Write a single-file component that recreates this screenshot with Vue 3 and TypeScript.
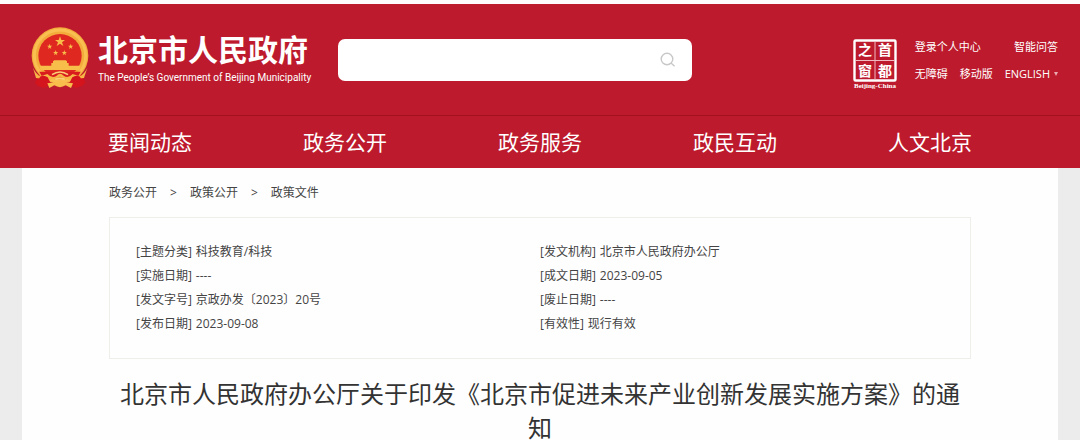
<script setup lang="ts">
import { ref } from 'vue'

interface Field {
  label: string
  value: string
}

const keyword = ref('')

const navItems: string[] = ['要闻动态', '政务公开', '政务服务', '政民互动', '人文北京']
const crumbs: string[] = ['政务公开', '政策公开', '政策文件']

const columns: Field[][] = [
  [
    { label: '主题分类', value: '科技教育/科技' },
    { label: '实施日期', value: '----' },
    { label: '发文字号', value: '京政办发〔2023〕20号' },
    { label: '发布日期', value: '2023-09-08' },
  ],
  [
    { label: '发文机构', value: '北京市人民政府办公厅' },
    { label: '成文日期', value: '2023-09-05' },
    { label: '废止日期', value: '----' },
    { label: '有效性', value: '现行有效' },
  ],
]
</script>

<template>
  <div class="page">
    <header class="header">
      <div class="top">
        <a class="brand" href="#">
          <svg class="emblem" viewBox="15 12 180 192" aria-hidden="true">
            <path d="M42 152 L30 184 L52 196 L74 180 L136 180 L158 196 L182 182 L168 152Z" fill="#d3141c" />
            <circle cx="105" cy="101" r="85" fill="#f3ac3c" />
            <circle cx="105" cy="101" r="77" fill="none" stroke="#f9bf50" stroke-width="9" />
            <circle cx="105" cy="101" r="65" fill="#df2920" />
            <g fill="#f8be4a">
              <path d="M105 43 l4 11 h11 l-9 7 4 11 -10 -7 -10 7 4 -11 -9 -7 h11z" />
              <path d="M74 65 l2 6 h6 l-5 4 2 6 -5 -4 -5 4 2 -6 -5 -4 h6z" />
              <path d="M137 65 l2 6 h6 l-5 4 2 6 -5 -4 -5 4 2 -6 -5 -4 h6z" />
              <path d="M92 84 l2 6 h6 l-5 4 2 6 -5 -4 -5 4 2 -6 -5 -4 h6z" />
              <path d="M118 84 l2 6 h6 l-5 4 2 6 -5 -4 -5 4 2 -6 -5 -4 h6z" />
              <path d="M84 118 l4 -3 h34 l4 3 v5 h5 v8 h36 l-4 13 h-116 l-4 -13 h36 v-8 h5z" />
            </g>
            <path d="M43 149 H167 L158 166 H52Z" fill="#d91d1f" />
            <path d="M24 137 Q33 157 47 163 L67 156 Q82 171 95 161 Q105 150 116 161 Q129 171 143 156 L163 163 Q178 157 187 137 L177 168 L157 170 L135 174 L105 164 L76 174 L52 170 L33 168Z" fill="#f6b747" />
            <path d="M45 164 Q57 158 68 166 L78 185 L58 198 L34 190Z M165 164 Q153 158 142 166 L132 185 L152 198 L176 190Z" fill="#d5151d" />
            <path d="M67 184 L90 181 Q105 172 121 181 L144 184 L138 198 L122 190 Q105 201 88 190 L73 198Z" fill="#f8bd4c" />
            <path d="M81 158 Q105 142 129 158 M91 172 Q105 166 119 172" fill="none" stroke="#fbcf78" stroke-width="5" />
          </svg>
          <span class="brand-text">
            <span class="brand-name">北京市人民政府</span>
            <span class="brand-en">The People’s Government of Beijing Municipality</span>
          </span>
        </a>

        <form class="search" role="search" @submit.prevent>
          <input v-model="keyword" class="search-input" type="text" aria-label="搜索" />
          <button class="search-button" type="submit" aria-label="搜索">
            <svg viewBox="0 0 16 16" width="16" height="16" fill="none" stroke="#c8c8c8" stroke-width="1.4">
              <circle cx="7" cy="7" r="5.8" />
              <path d="M11 11 L14.6 14.2" />
            </svg>
          </button>
        </form>

        <div class="tools">
          <a class="seal" href="#" aria-label="首都之窗">
            <svg viewBox="0 0 48 52" width="48" height="52">
              <rect x="3.5" y="2.5" width="41" height="40" rx="1" fill="none" stroke="#fff" stroke-width="2.4" />
              <path d="M24 3 V42 M4 22.5 H44" stroke="#f0b9bf" stroke-width="1" />
              <g class="seal-chars" fill="#fff" text-anchor="middle">
                <text x="14" y="17">之</text>
                <text x="34" y="17">首</text>
                <text x="14" y="38">窗</text>
                <text x="34" y="38">都</text>
              </g>
              <text class="seal-en" x="24" y="50" fill="#fff" text-anchor="middle">Beijing-China</text>
            </svg>
          </a>
          <div class="links">
            <div class="link-row">
              <a href="#">登录个人中心</a>
              <a href="#">智能问答</a>
            </div>
            <div class="link-row">
              <a href="#">无障碍</a>
              <a href="#">移动版</a>
              <a class="lang" href="#">ENGLISH
                <svg viewBox="0 0 4 4" width="4" height="4" aria-hidden="true"><path d="M0 0H4L2 4Z" fill="#e9a9af" /></svg>
              </a>
            </div>
          </div>
        </div>
      </div>

      <nav class="nav" aria-label="主导航">
        <a v-for="item in navItems" :key="item" href="#">{{ item }}</a>
      </nav>
    </header>

    <div class="backdrop">
      <main class="content">
        <nav class="crumbs" aria-label="当前位置">
          <template v-for="(crumb, i) in crumbs" :key="crumb">
            <span v-if="i > 0">&gt;</span>
            <a href="#">{{ crumb }}</a>
          </template>
        </nav>

        <section class="info">
          <dl v-for="(fields, i) in columns" :key="i" class="info-column">
            <div v-for="field in fields" :key="field.label" class="field">
              <dt>[{{ field.label }}]</dt>
              <dd>{{ field.value }}</dd>
            </div>
          </dl>
        </section>

        <h1 class="title">北京市人民政府办公厅关于印发《北京市促进未来产业创新发展实施方案》的通知</h1>
      </main>
    </div>
  </div>
</template>

<style>
body {
  margin: 0;
  background: #ececec;
}
</style>

<style scoped>
.page {
  min-height: 100vh;
  display: flex;
  flex-direction: column;
  box-sizing: border-box;
  border-top: 4px solid #fdfbfb;
  font-family: "Open Sans", "Noto Sans CJK SC", sans-serif;
  font-size: 12px;
  line-height: 24px;
  color: #444;
}

a {
  color: inherit;
  text-decoration: none;
}

.header {
  flex: none;
  background: #bd1b2d;
  color: #fff;
}

.top {
  display: flex;
  align-items: flex-start;
  box-sizing: border-box;
  min-height: 111px;
  padding: 22px 22px 0 30px;
}

.brand {
  flex: none;
  display: flex;
  gap: 8px;
  width: 284px;
}

.emblem {
  width: 60px;
  height: 64px;
}

.brand-text {
  display: flex;
  flex-direction: column;
  padding-top: 6px;
  white-space: nowrap;
}

.brand-name {
  font-size: 30px;
  font-weight: 700;
  line-height: 36px;
}

.brand-en {
  font-family: Roboto, sans-serif;
  font-size: 10px;
  line-height: 20px;
}

.search {
  flex: 0 1 354px;
  display: flex;
  box-sizing: border-box;
  height: 42px;
  margin: 13px 24px 0 24px;
  padding-right: 16px;
  background: #fff;
  border-radius: 7px;
}

.search-input {
  flex: 1;
  min-width: 0;
  padding: 0 16px;
  border: 0;
  background: transparent;
  font: inherit;
  outline: none;
}

.search-button {
  display: flex;
  align-items: center;
  padding: 0;
  border: 0;
  background: transparent;
}

.tools {
  display: flex;
  gap: 16px;
  margin-left: auto;
  padding-top: 12px;
}

.seal svg {
  display: block;
}

.seal-chars {
  font-family: "Noto Sans CJK SC", sans-serif;
  font-size: 14px;
  font-weight: 700;
}

.seal-en {
  font-family: "Liberation Serif", serif;
  font-size: 7px;
  font-weight: 700;
}

.links {
  display: flex;
  flex-direction: column;
  gap: 9px;
  font-size: 11px;
  line-height: 18px;
  white-space: nowrap;
}

.link-row {
  display: flex;
  justify-content: space-between;
  gap: 12px;
}

.lang {
  display: flex;
  align-items: center;
  gap: 4px;
}

.nav {
  display: flex;
  justify-content: space-between;
  padding: 0 10%;
  border-top: 1px solid #a3101f;
  font-size: 21px;
  line-height: 52px;
}

.backdrop {
  flex: 1;
  padding: 0 22px;
  background: #ececec;
}

.content {
  box-sizing: border-box;
  min-height: 100%;
  padding: 13px 87px 0;
  background: #fefefe;
}

.crumbs {
  display: flex;
  gap: 13px;
}

.info {
  display: grid;
  grid-template-columns: 1fr 1fr;
  margin-top: 12px;
  padding: 22px 26px;
  border: 1px solid #efefe9;
}

.info-column {
  margin: 0;
}

.field {
  display: flex;
  gap: 4px;
}

dd {
  margin: 0;
}

.title {
  margin: 18px 0 0;
  font-size: 24px;
  font-weight: 400;
  line-height: 34px;
  text-align: center;
  color: #333;
}
</style>
